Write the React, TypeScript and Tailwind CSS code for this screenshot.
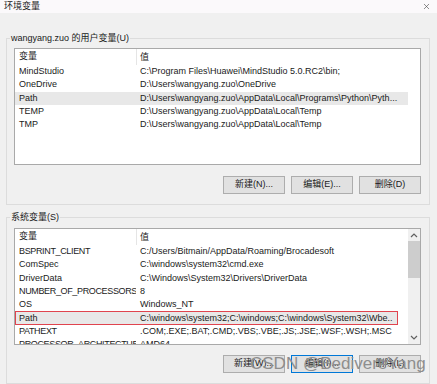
import { X } from "lucide-react";

const font = "font-['Segoe_UI','Liberation_Sans','Noto_Sans_CJK_SC',sans-serif]";

type Row = { name: string; value: string; selected?: boolean; marked?: boolean };

const userRows: Row[] = [
  { name: "MindStudio", value: "C:\\Program Files\\Huawei\\MindStudio 5.0.RC2\\bin;" },
  { name: "OneDrive", value: "D:\\Users\\wangyang.zuo\\OneDrive" },
  { name: "Path", value: "D:\\Users\\wangyang.zuo\\AppData\\Local\\Programs\\Python\\Pyth...", selected: true },
  { name: "TEMP", value: "D:\\Users\\wangyang.zuo\\AppData\\Local\\Temp" },
  { name: "TMP", value: "D:\\Users\\wangyang.zuo\\AppData\\Local\\Temp" },
];

const systemRows: Row[] = [
  { name: "BSPRINT_CLIENT", value: "C:/Users/Bitmain/AppData/Roaming/Brocadesoft" },
  { name: "ComSpec", value: "C:\\windows\\system32\\cmd.exe" },
  { name: "DriverData", value: "C:\\Windows\\System32\\Drivers\\DriverData" },
  { name: "NUMBER_OF_PROCESSORS", value: "8" },
  { name: "OS", value: "Windows_NT" },
  { name: "Path", value: "C:\\windows\\system32;C:\\windows;C:\\windows\\System32\\Wbe..", selected: true, marked: true },
  { name: "PATHEXT", value: ".COM;.EXE;.BAT;.CMD;.VBS;.VBE;.JS;.JSE;.WSF;.WSH;.MSC" },
  { name: "PROCESSOR_ARCHITECTURE", value: "AMD64" },
];

function Chevron({ up }: { up?: boolean }) {
  return (
    <svg width="8" height="5" viewBox="0 0 8 5" className="text-[#606060]">
      <polyline
        points={up ? "1,4 4,1 7,4" : "1,1 4,4 7,1"}
        fill="none"
        stroke="currentColor"
        strokeWidth="1.2"
      />
    </svg>
  );
}

function VarList({ rows, scroll }: { rows: Row[]; scroll?: boolean }) {
  return (
    <div className="flex h-[117px] border border-[#a9a9a9] bg-white">
      <div className="flex flex-1 flex-col overflow-hidden">
        <div className="grid h-[16px] shrink-0 grid-cols-[121px_1fr] items-center mr-[12px]">
          <span className="pl-[4px]">变量</span>
          <span className="h-full border-l border-[#e5e5e5] pl-[3px] leading-[16px]">值</span>
        </div>
        {rows.map((r) => {
          const caps = /^[A-Z_]{7,}$/.test(r.name);
          return (
            <div
              key={r.name}
              className={
                "grid h-[13.3px] shrink-0 grid-cols-[121px_1fr] items-center whitespace-nowrap leading-[13px] " +
                (r.selected ? "bg-[#e8e8e8] " : "") +
                (r.marked ? "mr-[10px] ring-1 ring-inset ring-[#e0444e]" : "mr-[12px]")
              }
            >
              <span className={"overflow-hidden pl-[4px] " + (caps ? "tracking-[-0.35px]" : "")}>{r.name}</span>
              <span className="overflow-hidden pl-[4px]">{r.value}</span>
            </div>
          );
        })}
      </div>
      {scroll && (
        <div className="flex w-[12px] flex-col bg-[#f0f0f0]">
          <div className="flex h-[12px] items-center justify-center">
            <Chevron up />
          </div>
          <div className="flex-1">
            <div className="h-[37px] bg-[#cdcdcd]" />
          </div>
          <div className="flex h-[13px] items-center justify-center">
            <Chevron />
          </div>
        </div>
      )}
    </div>
  );
}

function Buttons({ labels, focus }: { labels: string[]; focus?: number }) {
  return (
    <div className="flex justify-end gap-[6px]">
      {labels.map((l, i) => (
        <button
          key={l}
          className={
            "flex h-[18px] w-[62px] items-center justify-center border bg-[#e1e1e1] text-[9px] " +
            (i === focus ? "border-[#0078d7]" : "border-[#adadad]")
          }
        >
          {l}
        </button>
      ))}
    </div>
  );
}

export default function App() {
  return (
    <div className={`relative h-[384px] w-[437px] overflow-hidden bg-[#f0f0f0] text-[9px] text-[#1a1a1a] ${font}`}>
      <div className="flex h-[13px] items-center justify-between bg-[#fbf9fb] pl-[4px] pr-[6px]">
        <span className="leading-[13px]">环境变量</span>
        <X size={9} strokeWidth={1.6} className="text-[#444]" />
      </div>

      <div className="pl-[6px] pr-[7px]">
        <fieldset className="mt-[18px] border border-[#dcdcdc] pb-[10px] pl-[7px] pr-[8px]">
          <legend className="ml-[-4px] px-[1px] leading-[14px]">wangyang.zuo 的用户变量(U)</legend>
          <div className="mt-[3px]">
            <VarList rows={userRows} />
          </div>
          <div className="mt-[11px]">
            <Buttons labels={["新建(N)...", "编辑(E)...", "删除(D)"]} />
          </div>
        </fieldset>

        <fieldset className="mt-[5px] border border-[#dcdcdc] pb-[10px] pl-[7px] pr-[8px]">
          <legend className="ml-[-4px] px-[1px] leading-[14px]">系统变量(S)</legend>
          <div className="mt-[4px]">
            <VarList rows={systemRows} scroll />
          </div>
          <div className="mt-[10px]">
            <Buttons labels={["新建(W)...", "编辑(I)...", "删除(L)"]} focus={1} />
          </div>
        </fieldset>
      </div>

      <span className="absolute left-[250px] top-[353px] font-['Liberation_Sans',sans-serif] text-[17px] leading-[22px] text-[#8e8e8e]">
        CSDN @BediverеYang
      </span>
    </div>
  );
}
